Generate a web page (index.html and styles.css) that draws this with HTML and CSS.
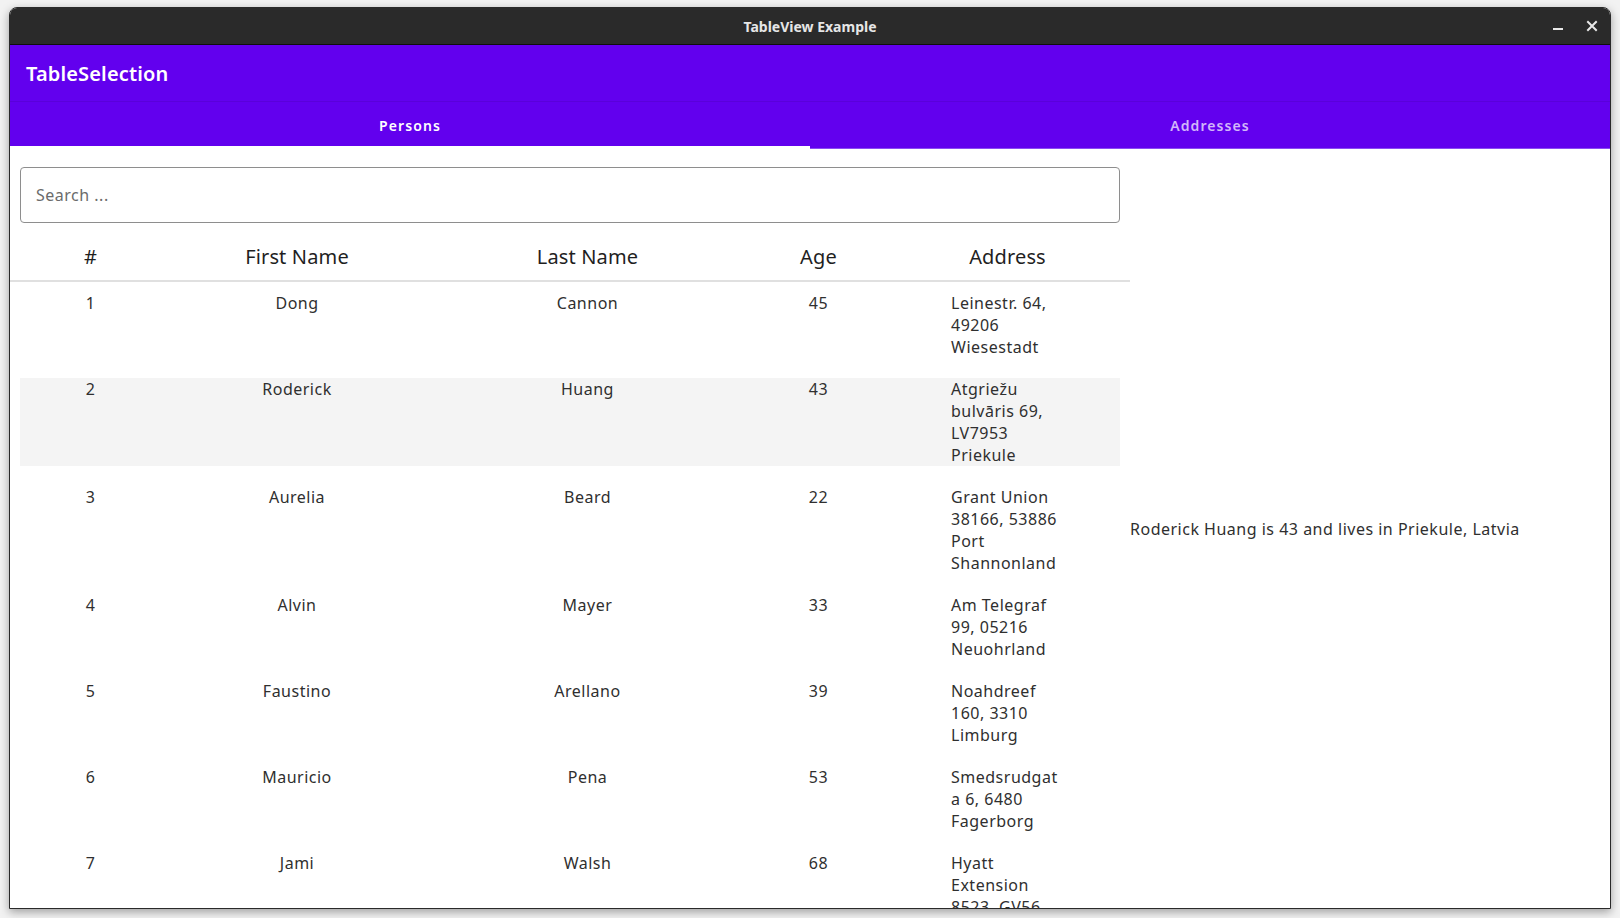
FILE: index.html
```html
<!DOCTYPE html>
<html>
<head>
<meta charset="utf-8">
<link rel="stylesheet" href="styles.css">
</head>
<body>
<div class="window">
  <div class="titlebar">
    <div class="spacer"></div>
    <div class="wtitle">TableView Example</div>
    <div class="controls">
      <span class="ctl"><svg width="12" height="12" viewBox="0 0 12 12"><rect x="1" y="8" width="10" height="2" fill="#e8e8e8"/></svg></span>
      <span class="ctl"><svg width="12" height="12" viewBox="0 0 12 12"><path d="M2 2 L10 10 M10 2 L2 10" stroke="#e8e8e8" stroke-width="2" stroke-linecap="square"/></svg></span>
    </div>
  </div>
  <div class="appbar"><span class="apptitle">TableSelection</span></div>
  <div class="tabs">
    <div class="tab active">Persons</div>
    <div class="tab">Addresses</div>
  </div>
  <div class="content">
    <div class="left">
      <div class="search"><span class="placeholder">Search ...</span></div>
      <div class="thead">
        <div class="th">#</div>
        <div class="th">First Name</div>
        <div class="th">Last Name</div>
        <div class="th">Age</div>
        <div class="th">Address</div>
      </div>
      <div class="tbody">
        <div class="row">
          <div class="td">1</div><div class="td">Dong</div><div class="td">Cannon</div><div class="td">45</div>
          <div class="td"><div class="addr">Leinestr. 64, 49206 Wiesestadt</div></div>
        </div>
        <div class="row selected">
          <div class="td">2</div><div class="td">Roderick</div><div class="td">Huang</div><div class="td">43</div>
          <div class="td"><div class="addr">Atgriežu bulvāris 69, LV7953 Priekule</div></div>
        </div>
        <div class="row">
          <div class="td">3</div><div class="td">Aurelia</div><div class="td">Beard</div><div class="td">22</div>
          <div class="td"><div class="addr">Grant Union 38166, 53886 Port Shannonland</div></div>
        </div>
        <div class="row">
          <div class="td">4</div><div class="td">Alvin</div><div class="td">Mayer</div><div class="td">33</div>
          <div class="td"><div class="addr">Am Telegraf 99, 05216 Neuohrland</div></div>
        </div>
        <div class="row">
          <div class="td">5</div><div class="td">Faustino</div><div class="td">Arellano</div><div class="td">39</div>
          <div class="td"><div class="addr">Noahdreef 160, 3310 Limburg</div></div>
        </div>
        <div class="row">
          <div class="td">6</div><div class="td">Mauricio</div><div class="td">Pena</div><div class="td">53</div>
          <div class="td"><div class="addr">Smedsrudgata 6, 6480 Fagerborg</div></div>
        </div>
        <div class="row">
          <div class="td">7</div><div class="td">Jami</div><div class="td">Walsh</div><div class="td">68</div>
          <div class="td"><div class="addr">Hyatt Extension 8523, GV56 Lake Kirlin</div></div>
        </div>
      </div>
    </div>
    <div class="right">
      <p class="detail">Roderick Huang is 43 and lives in Priekule, Latvia</p>
    </div>
  </div>
</div>
</body>
</html>
```

FILE: styles.css
```css
html, body {
  margin: 0;
  height: 918px;
  overflow: hidden;
}
body {
  background: #f2f2f2;
  padding: 7px 9px 0;
  box-sizing: border-box;
  font-family: "Noto Sans", "DejaVu Sans", sans-serif;
}
.window {
  width: 1602px;
  height: 902px;
  box-sizing: border-box;
  border: 1px solid #2a2a2a;
  border-radius: 8px 8px 0 0;
  background: #ffffff;
  display: flex;
  flex-direction: column;
  overflow: hidden;
  box-shadow: 0 3px 10px rgba(0, 0, 0, 0.35);
}
.titlebar {
  height: 36px;
  flex: 0 0 36px;
  background: #2a2a2a;
  border-bottom: 1px solid #0e0e0e;
  display: grid;
  grid-template-columns: 1fr auto 1fr;
  align-items: center;
}
.wtitle {
  color: #e6e6e6;
  font-weight: 700;
  font-size: 14px;
}
.controls {
  display: flex;
  justify-content: flex-end;
  gap: 10px;
  padding-right: 6px;
}
.ctl {
  width: 24px;
  height: 24px;
  display: flex;
  align-items: center;
  justify-content: center;
}
.appbar {
  height: 56px;
  flex: 0 0 56px;
  background: #6200ee;
  display: flex;
  align-items: center;
  padding-left: 16px;
}
.apptitle {
  color: #ffffff;
  font-size: 20px;
  font-weight: 600;
  letter-spacing: 0.15px;
}
.tabs {
  height: 48px;
  flex: 0 0 48px;
  background: #6200ee;
  display: flex;
  border-top: 1px solid #5a00da;
  box-sizing: border-box;
}
.tab {
  flex: 1;
  display: flex;
  align-items: center;
  justify-content: center;
  color: rgba(255, 255, 255, 0.72);
  font-size: 14px;
  font-weight: 600;
  letter-spacing: 1.1px;
  padding-bottom: 1px;
  box-shadow: inset 0 -1px 0 #8b4cf2;
}
.tab.active {
  color: #ffffff;
  box-shadow: inset 0 -3px 0 #ffffff;
}
.content {
  flex: 1;
  display: flex;
  overflow: hidden;
}
.left {
  width: 1120px;
  flex: 0 0 1120px;
}
.search {
  margin: 18px 10px 0;
  height: 56px;
  box-sizing: border-box;
  border: 1px solid #8e8e8e;
  border-radius: 4px;
  display: flex;
  align-items: center;
  padding-left: 15px;
}
.placeholder {
  color: #6b6b6b;
  font-size: 16px;
  letter-spacing: 0.5px;
}
.thead, .row {
  display: grid;
  grid-template-columns: 140px 273px 308px 154px 224px;
}
.thead {
  padding: 20px 10px 10px 10.5px;
  border-bottom: 2px solid #e0e0e0;
}
.th {
  text-align: center;
  font-size: 20px;
  line-height: 27px;
  letter-spacing: 0.15px;
  color: #1f1f1f;
}
.tbody {
  padding: 10px 10px 0;
  display: flex;
  flex-direction: column;
  gap: 20px;
}
.row {
  padding-left: 0.5px;
}
.row.selected {
  background: #f4f4f4;
}
.td {
  text-align: center;
  font-size: 16px;
  line-height: 22px;
  letter-spacing: 0.5px;
  color: #2f2f2f;
}
.addr {
  width: 113px;
  margin: 0 auto;
  text-align: left;
  overflow-wrap: anywhere;
}
.right {
  flex: 1;
  display: flex;
  align-items: center;
}
.detail {
  margin: 0;
  font-size: 16px;
  line-height: 22px;
  letter-spacing: 0.5px;
  color: #2f2f2f;
}
```
